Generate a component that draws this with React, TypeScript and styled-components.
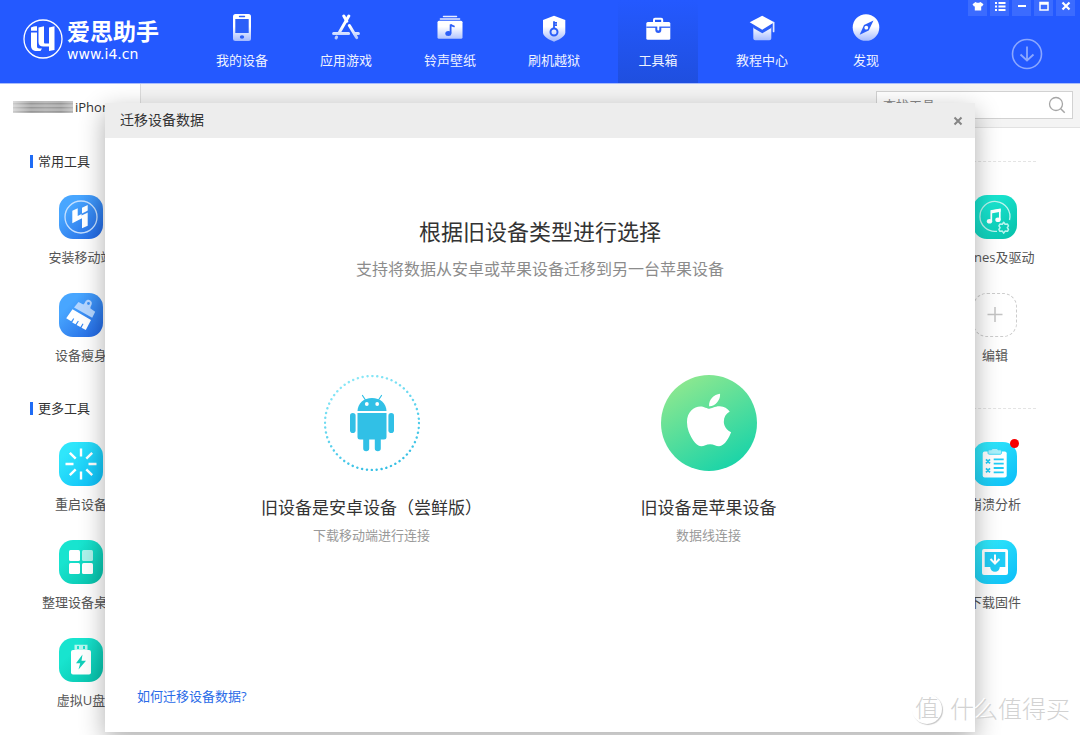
import React from "react";
import styled, { createGlobalStyle, css } from "styled-components";
import { FaApple } from "react-icons/fa";

const GlobalStyle = createGlobalStyle`
  *, *::before, *::after { box-sizing: border-box; }
  body {
    margin: 0;
    background: #fff;
    color: #333;
    font-family: "Open Sans", "Noto Sans CJK SC", sans-serif;
    font-size: 13px;
  }
  button, input { font: inherit; color: inherit; }
  button { border: 0; padding: 0; background: none; cursor: pointer; }
  svg { display: block; }
`;

const Page = styled.div`
  position: relative;
  min-height: 100vh;
  overflow: hidden;
`;

/* ---------- header ---------- */

const Header = styled.header`
  position: relative;
  z-index: 3;
  display: flex;
  height: 84px;
  background: #2459ff;
  border-bottom: 1px solid #a9bdfb;
`;

const Brand = styled.a`
  display: flex;
  align-items: flex-start;
  gap: 4px;
  width: 202px;
  padding: 19px 0 0 23px;
  color: #fff;
  text-decoration: none;
`;

const BrandText = styled.span`
  display: flex;
  flex-direction: column;
  font-family: "Liberation Sans", "Noto Sans CJK SC", sans-serif;
`;

const BrandName = styled.span`
  font-size: 23px;
  line-height: 26px;
  font-weight: 700;
`;

const BrandUrl = styled.span`
  font-family: "DejaVu Sans", sans-serif;
  font-size: 14px;
  line-height: 18px;
`;

const Nav = styled.nav`
  display: flex;
  gap: 24px;
`;

const NavItem = styled.button<{ $active?: boolean }>`
  display: flex;
  flex-direction: column;
  align-items: center;
  gap: 9px;
  width: 80px;
  padding-top: 14px;
  color: #eef2ff;
  line-height: 18px;
  ${(p) =>
    p.$active &&
    css`
      background: linear-gradient(#2459ff, #1f4fdf);
    `}
`;

const HeaderSide = styled.div`
  display: flex;
  flex: 1;
  flex-direction: column;
  align-items: flex-end;
  gap: 22px;
`;

const WindowButtons = styled.div`
  display: flex;
  gap: 3px;
  padding-right: 5px;
`;

const WindowButton = styled.button`
  display: flex;
  justify-content: center;
  width: 19px;
  height: 16px;
  background: #3b6bff;
`;

const DownloadButton = styled.button`
  margin-right: 37px;
`;

/* ---------- tab strip and search ---------- */

const SubBar = styled.div`
  display: flex;
  justify-content: space-between;
  height: 44px;
  background: #f4f4f4;
`;

const DeviceTab = styled.button`
  display: flex;
  align-items: center;
  gap: 2px;
  width: 141px;
  padding: 2px 0 0 13px;
  background: #fff;
  border-right: 1px solid #dcdcdc;
  text-align: left;
`;

const MaskedName = styled.span`
  width: 60px;
  height: 12px;
  background:
    linear-gradient(90deg, rgba(255, 255, 255, 0.5), transparent 30%, rgba(255, 255, 255, 0.1) 55%, transparent 80%, rgba(255, 255, 255, 0.3)),
    repeating-linear-gradient(#b4b4b4 0 2px, #979797 2px 3px, #a8a8a8 3px 4px);
`;

const SearchArea = styled.form`
  display: flex;
  flex: 1;
  justify-content: flex-end;
  padding: 7px 7px 0 0;
  border-bottom: 1px solid #e2e2e2;
`;

const SearchBox = styled.label`
  display: flex;
  align-items: center;
  width: 197px;
  height: 28px;
  padding: 0 6px;
  background: #fff;
  border: 1px solid #d2d2d2;
`;

const SearchInput = styled.input`
  flex: 1;
  min-width: 0;
  padding: 0;
  border: 0;
  outline: 0;
  background: none;
  line-height: 18px;
  &::placeholder { color: #888; opacity: 1; }
`;

/* ---------- tool sections ---------- */

const Tools = styled.main`
  display: flex;
  flex-direction: column;
  gap: 35px;
  padding: 24px 0;
`;

const Section = styled.section`
  display: flex;
  flex-direction: column;
  gap: 25px;
`;

const SectionHead = styled.div`
  display: flex;
  align-items: center;
  gap: 20px;
  padding: 0 44px 0 30px;
  &::after {
    content: "";
    flex: 1;
    border-top: 1px dashed #e4e4e4;
  }
`;

const SectionTitle = styled.h2`
  display: flex;
  align-items: center;
  gap: 5px;
  margin: 0;
  font-size: 13px;
  line-height: 18px;
  font-weight: 400;
  &::before {
    content: "";
    width: 3px;
    height: 13px;
    background: #1f6cf5;
  }
`;

const ToolRows = styled.div`
  display: flex;
  flex-direction: column;
  gap: 27px;
`;

const ToolRow = styled.div`
  display: flex;
  justify-content: space-between;
  padding: 0 40px 0 36px;
`;

const Tool = styled.button`
  display: flex;
  flex-direction: column;
  align-items: center;
  gap: 9px;
  width: 90px;
  color: #555;
  line-height: 18px;
  white-space: nowrap;
`;

const tones = {
  blue: "linear-gradient(135deg, #48a6ff 25%, #1f62e0)",
  cyan: "linear-gradient(135deg, #2fe6fb 20%, #0bbcf8)",
  teal: "linear-gradient(135deg, #18e4cf 30%, #06bfa8)",
};

const ToolTile = styled.span<{ $tone?: keyof typeof tones }>`
  position: relative;
  display: flex;
  width: 44px;
  height: 44px;
  border-radius: 14px;
  ${(p) =>
    p.$tone
      ? css`
          background: ${tones[p.$tone]};
        `
      : css`
          border: 1px dashed #ccc;
          align-items: center;
          justify-content: center;
        `}
`;

const NewDot = styled.span`
  position: absolute;
  top: -3px;
  right: -2px;
  width: 9px;
  height: 9px;
  border-radius: 50%;
  background: #f80000;
`;

/* ---------- dialog ---------- */

const Overlay = styled.div`
  position: absolute;
  inset: 0;
  z-index: 2;
  display: flex;
  justify-content: center;
  padding: 103px 20px 3px;
`;

const Dialog = styled.div`
  display: flex;
  flex-direction: column;
  flex: 1;
  max-width: 870px;
  background: #fff;
  box-shadow: 0 8px 24px rgba(0, 0, 0, 0.32);
`;

const DialogHead = styled.div`
  display: flex;
  align-items: center;
  justify-content: space-between;
  height: 35px;
  padding: 0 12px 0 15px;
  background: #ededed;
`;

const DialogTitle = styled.h1`
  margin: 0;
  padding-bottom: 2px;
  font-size: 14px;
  line-height: 20px;
  font-weight: 400;
`;

const DialogBody = styled.div`
  display: flex;
  flex: 1;
  flex-direction: column;
  align-items: center;
  padding: 78px 32px 26px;
`;

const Question = styled.h2`
  margin: 0;
  font-size: 22px;
  line-height: 30px;
  font-weight: 400;
`;

const Hint = styled.p`
  margin: 13px 0 96px;
  color: #8c8c8c;
  font-size: 16px;
  line-height: 20px;
`;

const Choices = styled.div`
  display: flex;
  gap: 96px;
`;

const Choice = styled.button`
  display: flex;
  flex-direction: column;
  align-items: center;
  width: 241px;
`;

const ChoiceBadge = styled.span<{ $filled?: boolean }>`
  display: flex;
  align-items: center;
  justify-content: center;
  width: 96px;
  height: 96px;
  border-radius: 50%;
  color: #fff;
  ${(p) =>
    p.$filled &&
    css`
      padding-bottom: 6px;
      background: linear-gradient(150deg, #8ee88f 10%, #17d3a9 90%);
    `}
`;

const ChoiceTitle = styled.span`
  margin-top: 25px;
  font-size: 17px;
  line-height: 24px;
  white-space: nowrap;
`;

const ChoiceNote = styled.span`
  margin-top: 5px;
  color: #999;
  line-height: 20px;
`;

const HelpLink = styled.a`
  align-self: flex-start;
  margin-top: auto;
  color: #2a6be8;
  line-height: 20px;
  text-decoration: none;
`;

const Watermark = styled.div`
  position: absolute;
  right: 10px;
  bottom: 10px;
  z-index: 4;
  display: flex;
  align-items: center;
  gap: 8px;
  color: #d2d2d2;
  font-size: 24px;
  line-height: 32px;
  font-weight: 300;
  text-shadow: -1px -1px 0 #fff;
  pointer-events: none;
`;

const WatermarkSeal = styled.span`
  width: 30px;
  height: 30px;
  border-radius: 50%;
  box-shadow: 1px 1px 1px #c6c6c6;
  line-height: 28px;
  text-align: center;
`;

/* ---------- drawings ---------- */

const BLUE = "#2c5ff8";

const Glyph = ({ size, children }: { size: number; children: React.ReactNode }) => (
  <svg width={size} height={size} viewBox={`0 0 ${size} ${size}`} fill="none" aria-hidden="true">
    {children}
  </svg>
);

const HiddenDefs = styled.svg`
  position: absolute;
`;

const NavDefs = () => (
  <HiddenDefs width="0" height="0" aria-hidden="true">
    <defs>
      <linearGradient id="navFade" gradientUnits="userSpaceOnUse" x1="0" y1="0" x2="0" y2="28">
        <stop offset="0.45" stopColor="#fff" />
        <stop offset="1" stopColor="#9db5ff" />
      </linearGradient>
    </defs>
  </HiddenDefs>
);

const FADE = "url(#navFade)";

const navItems = [
  {
    label: "我的设备",
    icon: (
      <>
        <rect x="5" y="0" width="18" height="27" rx="2.5" fill={FADE} />
        <rect x="7.3" y="5" width="13.4" height="14" fill={BLUE} />
        <path d="M11.5 2.5h5" stroke={BLUE} strokeWidth="1.4" strokeLinecap="round" />
        <ellipse cx="14" cy="23" rx="2.2" ry="1.8" fill={BLUE} />
      </>
    ),
  },
  {
    label: "应用游戏",
    icon: (
      <g stroke={FADE} strokeWidth="3" strokeLinecap="round">
        <path d="M16.8 2 7.6 18" />
        <path d="M11.8 2l3 5.2M17.4 11.5 24.6 23.6" />
        <path d="M4.6 23.1l-.5.9" />
        <path d="M1.6 19.4h15M22.4 19.45h4" />
      </g>
    ),
  },
  {
    label: "铃声壁纸",
    icon: (
      <>
        <path d="M7.5 2.4h13M4.4 5.1h19.2" stroke="#e8edff" strokeWidth="1.5" strokeLinecap="round" />
        <rect x="1.5" y="6.8" width="25" height="18" rx="1.5" fill={FADE} />
        <ellipse cx="12.3" cy="19.4" rx="3" ry="2.5" fill={BLUE} />
        <path d="M14.6 19.4v-9c.8 1.6 1.8 1.2 4 2.3" stroke={BLUE} strokeWidth="1.8" />
      </>
    ),
  },
  {
    label: "刷机越狱",
    icon: (
      <>
        <path d="M14 1.7 25.3 6v12.5c0 4-6 7-11.3 9.2C8.7 25.5 3 22.5 3 18.5V6z" fill={FADE} />
        <circle cx="14" cy="18" r="3.5" stroke={BLUE} strokeWidth="2" />
        <path d="M14 14.5V7.2M14 8.8h3M14 11.2h3" stroke={BLUE} strokeWidth="1.8" />
      </>
    ),
  },
  {
    label: "工具箱",
    active: true,
    icon: (
      <>
        <path d="M10 9V5.8c0-.7.4-1 1-1h6.2c.6 0 1 .3 1 1V9" stroke="#fff" strokeWidth="2" />
        <rect x="2.3" y="8" width="24" height="17.8" rx="1.5" fill="#fff" />
        <path d="M2.3 13.2h24" stroke={BLUE} strokeWidth="1.3" />
        <path d="M11.3 13v3a3 3 0 0 0 6 0v-3z" fill={BLUE} />
        <path d="M13.3 12v3.5a1 1 0 0 0 2 0V12z" fill="#fff" />
      </>
    ),
  },
  {
    label: "教程中心",
    icon: (
      <>
        <path d="M5.3 13l9 4.800 9-4.800v11.300c0 1.200-.8 2-2 2H7.300c-1.200 0-2-.8-2-2z" fill={FADE} />
        <path d="M1.700 8.200 5.300 11v3l9 5.300 9-5.300v-3z" fill={BLUE} />
        <path d="M14.2 1.7 26.300 8.200l-12.100 7.600L1.7 8.2z" fill="#fff" />
        <path d="M25.6 8.5v9" stroke="#e3eaff" strokeWidth="1.7" strokeLinecap="round" />
      </>
    ),
  },
  {
    label: "发现",
    icon: (
      <>
        <circle cx="14" cy="13.5" r="13.3" fill={FADE} />
        <path d="M21.5 6.5l-4.8 10-9 4.3 4.3-9.8z" fill={BLUE} />
        <circle cx="14.3" cy="13.7" r="1.9" fill="#fff" />
      </>
    ),
  },
];

const windowButtons = [
  {
    label: "皮肤",
    icon: <path d="M5.5 2l1.500.8h2l1.500-.8 3 2.200-1.500 2.300-.8-.3v4.300H4.800V6.200L4 6.500 2.500 4.200z" fill="#fff" />,
  },
  {
    label: "菜单",
    icon: <path d="M3 3h2M3 6.5h2M3 10h2M6.5 3h7M6.5 6.5h7M6.5 10h7" stroke="#fff" strokeWidth="1.8" />,
  },
  { label: "最小化", icon: <path d="M4 6h8" stroke="#fff" strokeWidth="2" /> },
  { label: "最大化", icon: <path d="M4 2.5h8v7.5H4zM4 4h8" stroke="#fff" strokeWidth="1.5" /> },
  { label: "关闭", icon: <path d="M4.5 2.5l7 7M11.5 2.5l-7 7" stroke="#fff" strokeWidth="2.2" /> },
];

const LogoMark = () => (
  <Glyph size={40}>
    <circle cx="20" cy="20" r="19" stroke="#fff" strokeWidth="1.3" />
    <g fill="#fff">
      <path d="M8 8.500c1.500-.8 3.800-1.200 6-1.200v4.500H8z" />
      <path d="M8 13.500h6V27c0 1.800.8 2.500 2.500 2.500h2.500L17.500 32H14c-4 0-6-1.800-6-5.500z" />
      <path d="M15.500 8.500l5.500-1.200V23c0 1.200.4 1.500 1.500 1.500h3.500V8.500l5.500-1.200V31l-5.500 1v-4.500h-5.500c-3.300 0-5-1.500-5-4.500z" />
    </g>
  </Glyph>
);

const MobileClientIcon = (
  <>
    <circle cx="22" cy="22" r="16" stroke="#c6e0ff" strokeWidth="1.3" />
    <path d="M13.3 15.7l5.4-2.4V21l4.300-2.3v-6L28.700 10v20.700L23 33.300V23.300l-9.700 5z" fill="#fff" />
    <path d="M22.500 18.800 29 15.600v1.800l-6.500 3.200z" fill="#3b8ff5" />
  </>
);

const BrushIcon = (
  <>
    <path d="M19.5 9l4.8 2.5c.8-.5 1.3-1.4 2-2.7 1.2-2 3.5-2.4 5-1.4 1.6 1 2 3 1 4.9-.7 1.3-1.1 2.3-.8 3.2l4.7 3.2-3 6L15 14.5z" fill="#b4d6ff" />
    <circle cx="29.5" cy="10.5" r="1.4" fill="#3c91f8" />
    <path
      d="M13.5 16.2 32 27l-5.2 10-4.3-2.3 2-3.7-.9-.5-2.2 3.6-3.8-2.1 2.2-3.8-.9-.5-2.400 3.600-3.300-1.900 2-3.600-.9-.5-2.100 3-5-3z"
      fill="#fff"
    />
  </>
);

const RestartIcon = (
  <path
    d="M22 6.5v8M22 29.5v8M6.5 22h8M29.5 22h8M10.800 10.800l5.900 5.900M27.300 27.300l5.900 5.900M33.200 10.800l-5.900 5.900M16.700 27.300l-5.900 5.900"
    stroke="#fff"
    strokeWidth="2.4"
  />
);

const DesktopIcon = (
  <>
    <rect x="10" y="10" width="11" height="11" rx="1.5" fill="#fff" />
    <rect x="23" y="10" width="11" height="11" rx="1.5" fill="#fff" opacity="0.65" />
    <rect x="10" y="23" width="11" height="11" rx="1.5" fill="#fff" />
    <rect x="23" y="23" width="11" height="11" rx="1.5" fill="#fff" />
  </>
);

const UsbIcon = (
  <>
    <path d="M15.5 6.8h13V12h-13zM18 8v3h2V8zM24 8v3h2V8z" fill="#b5f6ee" fillRule="evenodd" />
    <rect x="12" y="12" width="20" height="24.5" rx="2" fill="#fff" />
    <path d="M23.5 16.500 17 25.2h4.200L19.500 31.500l7.500-8.700h-4.500z" fill="#10cfba" />
  </>
);

const ItunesIcon = (
  <>
    <path d="M24 36.3A15 15 0 1 1 36.5 25" stroke="#b9f5ee" strokeWidth="1.3" />
    <path d="M18.3 26.3V16l8.500-1.500v10.300" stroke="#fff" strokeWidth="1.7" />
    <path d="M18 15.5l9.600-1.700v3L18 18.500z" fill="#fff" />
    <ellipse cx="16.500" cy="26.300" rx="2.700" ry="2.300" fill="#fff" />
    <ellipse cx="25" cy="24.800" rx="2.700" ry="2.300" fill="#fff" />
    <path
      d="M30.700 27.300l1.400 2 2.400-.2 1 1.800-1.200 1.700 1.200 1.900-1 1.800-2.400-.2-1.400 2-1.400-2-2.400.2-1-1.800 1.200-1.900-1.200-1.700 1-1.800 2.400.2z"
      stroke="#b9f5ee"
      strokeWidth="1.500"
      strokeLinejoin="round"
    />
  </>
);

const CrashIcon = (
  <>
    <rect x="9.7" y="9.5" width="24" height="26" rx="2" fill="#fff" />
    <path d="M15 9.3c0-1 .5-1.500 1.500-1.500h2l1-1.300h4.500l1 1.300h2c1 0 1.500.5 1.500 1.500v1.500c0 1-.5 1.500-1.500 1.500H16.500c-1 0-1.500-.5-1.500-1.500z" fill="#a9f1fb" stroke="#24d3f8" strokeWidth="0.8" />
    <path d="M20.7 17.3h10M20.7 21.7h10M20.7 26h10M20.7 30.3h10M13 17.3l4 4M17 17.3l-4 4M13 26.3l4 4M17 26.3l-4 4" stroke="#20cdf6" strokeWidth="1.8" />
  </>
);

const FirmwareIcon = (
  <>
    <rect x="9" y="9" width="26" height="26" rx="2" fill="#fff" />
    <path d="M11.7 12h20.6v15h-5.500a4.800 4.800 0 0 1-9.600 0h-5.500z" fill="#20cdf6" />
    <path d="M22 14.5v8M17.5 19l4.5 4.5 4.5-4.5" stroke="#fff" strokeWidth="2" />
  </>
);

const AndroidBadge = () => (
  <svg width="96" height="96" viewBox="0 0 96 96" fill="none" aria-hidden="true">
    <defs>
      <linearGradient id="androidRing" x1="0.2" y1="0" x2="0.6" y2="1">
        <stop offset="0" stopColor="#8feaf8" />
        <stop offset="1" stopColor="#35bfe4" />
      </linearGradient>
    </defs>
    <circle cx="48" cy="48" r="47" stroke="url(#androidRing)" strokeWidth="2.4" strokeLinecap="round" strokeDasharray="0.1 4.822" />
    <g fill="#31c0e6">
      <path d="M33.5 36c.3-7.8 6.3-13 14.5-13s14.2 5.2 14.5 13z" />
      <path d="M33.5 38h29v24c0 1.7-1 2.500-2.500 2.500h-3.200V73.500c0 1.800-1.200 2.800-3 2.800s-3-1-3-2.800v-9h-5.600v9c0 1.800-1.200 2.800-3 2.800s-3-1-3-2.800v-9H36c-1.500 0-2.500-.8-2.500-2.500z" />
      <rect x="26" y="38" width="5.6" height="20" rx="2.8" />
      <rect x="64.4" y="38" width="5.6" height="20" rx="2.8" />
    </g>
    <path d="M41.5 25l-3-4.5M54.5 25l3-4.5" stroke="#31c0e6" strokeWidth="1.2" strokeLinecap="round" />
    <circle cx="42.8" cy="29" r="1.9" fill="#fff" />
    <circle cx="53.2" cy="29" r="1.9" fill="#fff" />
  </svg>
);

/* ---------- page ---------- */

type ToolInfo = {
  label: string;
  tone?: keyof typeof tones;
  icon: React.ReactNode;
  isNew?: boolean;
};

const sections: { title: string; rows: ToolInfo[][] }[] = [
  {
    title: "常用工具",
    rows: [
      [
        { label: "安装移动端", tone: "blue", icon: MobileClientIcon },
        { label: "iTunes及驱动", tone: "teal", icon: ItunesIcon },
      ],
      [
        { label: "设备瘦身", tone: "blue", icon: BrushIcon },
        { label: "编辑", icon: <path d="M21 13v15M13.5 20.500h15" stroke="#c4c4c4" strokeWidth="1.5" /> },
      ],
    ],
  },
  {
    title: "更多工具",
    rows: [
      [
        { label: "重启设备", tone: "cyan", icon: RestartIcon },
        { label: "崩溃分析", tone: "cyan", icon: CrashIcon, isNew: true },
      ],
      [
        { label: "整理设备桌面", tone: "teal", icon: DesktopIcon },
        { label: "下载固件", tone: "cyan", icon: FirmwareIcon },
      ],
      [{ label: "虚拟U盘", tone: "teal", icon: UsbIcon }],
    ],
  },
];

export default function App() {
  return (
    <Page>
      <GlobalStyle />
      <NavDefs />
      <Header>
        <Brand href="#">
          <LogoMark />
          <BrandText>
            <BrandName>爱思助手</BrandName>
            <BrandUrl>www.i4.cn</BrandUrl>
          </BrandText>
        </Brand>
        <Nav>
          {navItems.map((item) => (
            <NavItem key={item.label} $active={item.active}>
              <Glyph size={28}>{item.icon}</Glyph>
              {item.label}
            </NavItem>
          ))}
        </Nav>
        <HeaderSide>
          <WindowButtons>
            {windowButtons.map((b) => (
              <WindowButton key={b.label} aria-label={b.label}>
                <Glyph size={16}>{b.icon}</Glyph>
              </WindowButton>
            ))}
          </WindowButtons>
          <DownloadButton aria-label="下载">
            <Glyph size={32}>
              <circle cx="16" cy="16" r="14.5" stroke="#8ba7ff" strokeWidth="1.6" />
              <path d="M16 8.5v14M9.5 16.5l6.5 6 6.5-6" stroke="#8ba7ff" strokeWidth="1.8" />
            </Glyph>
          </DownloadButton>
        </HeaderSide>
      </Header>

      <SubBar>
        <DeviceTab>
          <MaskedName />
          iPhone
        </DeviceTab>
        <SearchArea>
          <SearchBox>
            <SearchInput type="text" placeholder="查找工具" aria-label="查找工具" />
            <Glyph size={18}>
              <circle cx="8" cy="8" r="6.5" stroke="#a6a6a6" strokeWidth="1.3" />
              <path d="M12.7 12.7l4 4" stroke="#a6a6a6" strokeWidth="1.5" />
            </Glyph>
          </SearchBox>
        </SearchArea>
      </SubBar>

      <Tools>
        {sections.map((section) => (
          <Section key={section.title}>
            <SectionHead>
              <SectionTitle>{section.title}</SectionTitle>
            </SectionHead>
            <ToolRows>
              {section.rows.map((row) => (
                <ToolRow key={row[0].label}>
                  {row.map((tool) => (
                    <Tool key={tool.label}>
                      <ToolTile $tone={tool.tone}>
                        <Glyph size={tool.tone ? 44 : 42}>{tool.icon}</Glyph>
                        {tool.isNew && <NewDot />}
                      </ToolTile>
                      {tool.label}
                    </Tool>
                  ))}
                </ToolRow>
              ))}
            </ToolRows>
          </Section>
        ))}
      </Tools>

      <Overlay>
        <Dialog role="dialog" aria-labelledby="dialog-title">
          <DialogHead>
            <DialogTitle id="dialog-title">迁移设备数据</DialogTitle>
            <button aria-label="关闭">
              <Glyph size={10}>
                <path d="M1.5 1.5l7 7M8.5 1.5l-7 7" stroke="#858585" strokeWidth="2" />
              </Glyph>
            </button>
          </DialogHead>
          <DialogBody>
            <Question>根据旧设备类型进行选择</Question>
            <Hint>支持将数据从安卓或苹果设备迁移到另一台苹果设备</Hint>
            <Choices>
              <Choice>
                <ChoiceBadge>
                  <AndroidBadge />
                </ChoiceBadge>
                <ChoiceTitle>旧设备是安卓设备（尝鲜版）</ChoiceTitle>
                <ChoiceNote>下载移动端进行连接</ChoiceNote>
              </Choice>
              <Choice>
                <ChoiceBadge $filled>
                  <FaApple size={60} aria-hidden="true" />
                </ChoiceBadge>
                <ChoiceTitle>旧设备是苹果设备</ChoiceTitle>
                <ChoiceNote>数据线连接</ChoiceNote>
              </Choice>
            </Choices>
            <HelpLink href="#">如何迁移设备数据?</HelpLink>
          </DialogBody>
        </Dialog>
      </Overlay>

      <Watermark>
        <WatermarkSeal>值</WatermarkSeal>
        什么值得买
      </Watermark>
    </Page>
  );
}
